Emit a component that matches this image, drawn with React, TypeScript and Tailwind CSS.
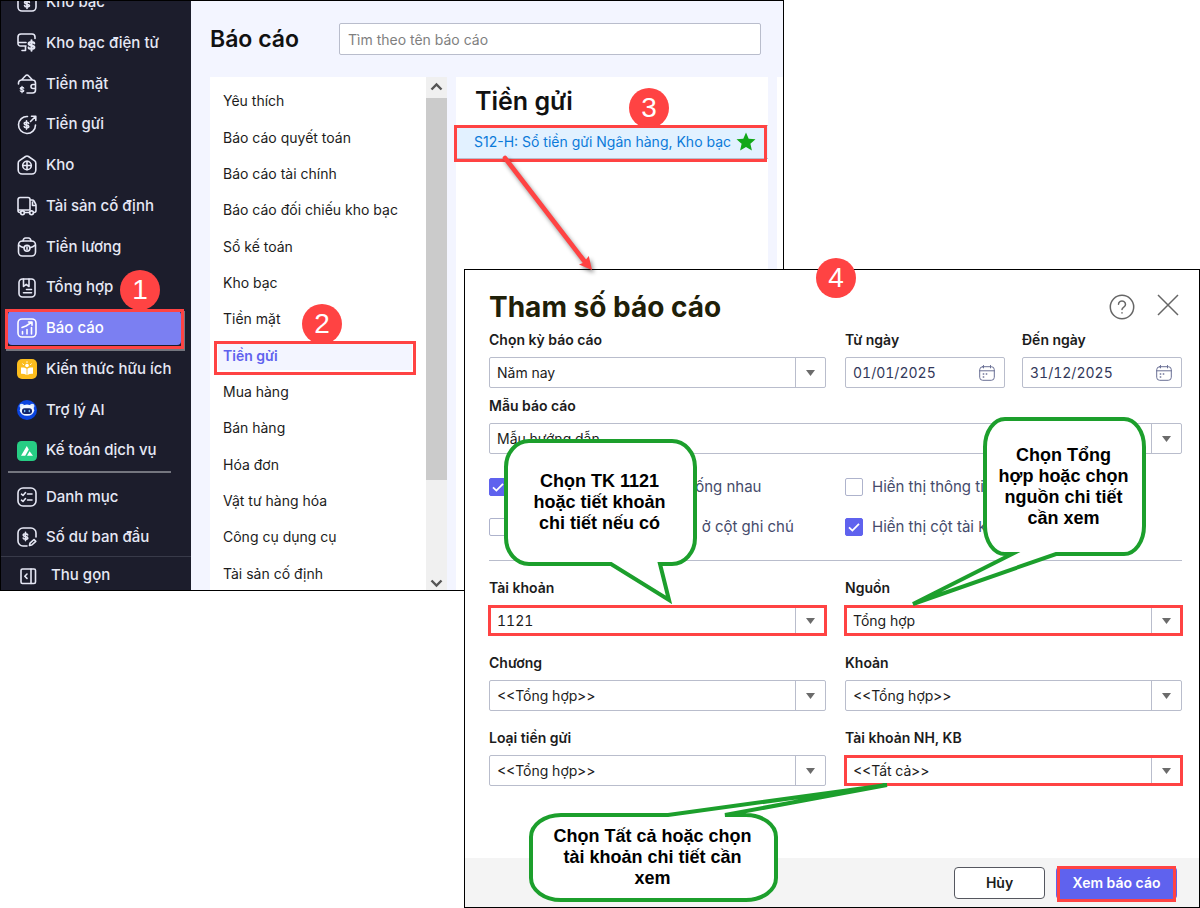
import type { ReactNode } from "react";

type IconProps = { children: ReactNode };

const LineIcon = ({ children }: IconProps) => (
  <svg
    viewBox="0 0 20 20"
    className="size-5 shrink-0"
    fill="none"
    stroke="currentColor"
    strokeWidth="1.6"
    strokeLinecap="round"
    strokeLinejoin="round"
    aria-hidden="true"
  >
    {children}
  </svg>
);

const Dollar = ({ x, y, scale = 1 }: { x: number; y: number; scale?: number }) => (
  <path
    transform={`translate(${x} ${y}) scale(${scale})`}
    strokeWidth="1.7"
    d="M2.3-1.7C2.1-3.2-2.4-3.3-2.4-1.4S2.4-.3 2.4 1.5-2.2 3.2-2.4 1.7M0-4.3v8.6"
  />
);

const icons = {
  treasury: (
    <LineIcon>
      <rect x="1" y="1" width="18" height="18" rx="4" />
      <Dollar x={10} y={12} />
    </LineIcon>
  ),
  etreasury: (
    <LineIcon>
      <path d="M18 5.500V4a3 3 0 0 0-3-3H4a3 3 0 0 0-3 3v6.500A2.500 2.500 0 0 0 3.500 13H9M1 9.500h8M8.500 13v4.500M5 17.500h3.500" />
      <Dollar x={14.5} y={12.500} scale={1.2} />
    </LineIcon>
  ),
  cash: (
    <LineIcon>
      <path d="M1.500 10V9a3 3 0 0 1 3-3h11a3 3 0 0 1 3 3v7a3 3 0 0 1-3 3H10M4.500 6l4-4.300a2 2 0 0 1 3 0l4 4.300M18.500 10.500H16a2 2 0 0 0 0 4h2.500" />
      <Dollar x={5} y={15.500} scale={0.75} />
    </LineIcon>
  ),
  deposit: (
    <LineIcon>
      <path d="M10.500 1.500a8.500 8.500 0 1 0 8 8.500M13.500 6.500l5-5M14.500 1.200h4.300v4.300" />
      <Dollar x={9.5} y={10} scale={0.95} />
    </LineIcon>
  ),
  stock: (
    <LineIcon>
      <path d="M1.200 8.200a3 3 0 0 1 1.300-2.500l6-4.200a2.600 2.600 0 0 1 3 0l6 4.200a3 3 0 0 1 1.300 2.500V15a4 4 0 0 1-4 4H5.200a4 4 0 0 1-4-4Z" />
      <circle cx="10" cy="10.500" r="4.300" />
      <path d="M10 6.200v8.600M5.700 10.500h8.600" />
    </LineIcon>
  ),
  asset: (
    <LineIcon>
      <path d="M3.500 16.500H3a2 2 0 0 1-2-2V3.500a2 2 0 0 1 2-2h8a2 2 0 0 1 2 2v10.500H1M13 4h2.300a2 2 0 0 1 1.700 1l1.700 3.200a3 3 0 0 1 .3 1.300v5a2 2 0 0 1-2 2M7.500 16.500h5M15.500 6v3.500h3.200" />
      <circle cx="5.500" cy="16.800" r="1.900" />
      <circle cx="14.500" cy="16.800" r="1.900" />
    </LineIcon>
  ),
  salary: (
    <LineIcon>
      <rect x="1.500" y="4" width="17" height="15" rx="4" />
      <path d="M6 4c.3-2 1.200-3 2.500-3h3c1.300 0 2.200 1 2.500 3M1.700 8.200c2 1.700 3.500 2.300 5.300 2.600M18.300 8.200c-2 1.700-3.500 2.300-5.300 2.600" />
      <circle cx="10" cy="11.300" r="2.900" />
      <path d="M10 10v2.600" />
    </LineIcon>
  ),
  ledger: (
    <LineIcon>
      <rect x="2" y="1" width="16" height="18" rx="3.500" />
      <path d="M6.500 1v7.500L9.200 6.300 12 8.500V1M9.500 11.500h5M6.500 14.800h8" />
    </LineIcon>
  ),
  report: (
    <LineIcon>
      <rect x="1" y="1" width="18" height="18" rx="4" />
      <path d="M5.500 16v-2.500M10 16v-4.500M14.500 16V9.500M5 9.500l4-1.500 5.500-3.700M11.500 4h3.500v3.200" />
    </LineIcon>
  ),
  knowledge: (
    <svg viewBox="0 0 20 20" className="size-5 shrink-0" aria-hidden="true">
      <rect width="20" height="20" rx="5" fill="#fbbc1d" />
      <path d="M4 8.500c2.300-.3 4.300.2 5.600 1.200v6.200C8 15 6 14.600 4 14.800ZM16 8.500c-2.300-.3-4.300.2-5.600 1.200v6.200c1.600-.9 3.600-1.300 5.600-1.100Z" fill="#fff" />
      <circle cx="10" cy="6.500" r="1.800" fill="#fff" />
      <path d="M6.500 5.500l-.8-.6M13.500 5.500l.8-.6M10 3.500v-.8" stroke="#fff" strokeWidth="1" strokeLinecap="round" />
    </svg>
  ),
  assistant: (
    <svg viewBox="0 0 20 20" className="size-5 shrink-0" aria-hidden="true">
      <circle cx="10" cy="10" r="10" fill="#0b45e0" />
      <circle cx="4.800" cy="6" r="2.300" fill="#dbe9ff" />
      <circle cx="15.200" cy="6" r="2.300" fill="#dbe9ff" />
      <ellipse cx="10" cy="10.200" rx="7.200" ry="5.600" fill="#f4f8ff" />
      <rect x="5" y="8.300" width="10" height="5.600" rx="2.600" fill="#12246b" />
      <path d="M7.700 10.400v1.200M12.300 10.400v1.200" stroke="#7fd0ff" strokeWidth="1.300" strokeLinecap="round" />
    </svg>
  ),
  service: (
    <svg viewBox="0 0 20 20" className="size-5 shrink-0" aria-hidden="true">
      <rect width="20" height="20" rx="4.500" fill="#27cd84" />
      <path d="M4 14.800 9.800 5l2 3.400-3.600 6.400ZM10 14.800l2.600-4.500 3.400 4.500Z" fill="#fff" />
    </svg>
  ),
  catalog: (
    <LineIcon>
      <rect x="1" y="1" width="18" height="18" rx="5" />
      <path d="M4.500 7.200l1.500 1.300 2.500-3M10.500 7H15M4.500 13.200l1.500 1.300 2.500-3M10.500 13H15" />
    </LineIcon>
  ),
  balance: (
    <LineIcon>
      <path d="M10 19H6a5 5 0 0 1-5-5V6a5 5 0 0 1 5-5h8a5 5 0 0 1 5 5v4M12.500 18.500l.5-2.300 4-3.700 1.800 1.900-4 3.600Z" />
      <Dollar x={8.5} y={9.500} scale={0.95} />
    </LineIcon>
  ),
  collapse: (
    <LineIcon>
      <rect x="4" y="3" width="14.500" height="14.500" rx="1.500" />
      <path d="M14 3v14.500M10 8l-2.200 2.200L10 12.400" />
    </LineIcon>
  ),
};

const menu = [
  { label: "Kho bạc", icon: icons.treasury },
  { label: "Kho bạc điện tử", icon: icons.etreasury },
  { label: "Tiền mặt", icon: icons.cash },
  { label: "Tiền gửi", icon: icons.deposit },
  { label: "Kho", icon: icons.stock },
  { label: "Tài sản cố định", icon: icons.asset },
  { label: "Tiền lương", icon: icons.salary },
  { label: "Tổng hợp", icon: icons.ledger },
  { label: "Báo cáo", icon: icons.report, active: true },
  { label: "Kiến thức hữu ích", icon: icons.knowledge },
  { label: "Trợ lý AI", icon: icons.assistant },
  { label: "Kế toán dịch vụ", icon: icons.service },
];

const categories = [
  "Yêu thích",
  "Báo cáo quyết toán",
  "Báo cáo tài chính",
  "Báo cáo đối chiếu kho bạc",
  "Sổ kế toán",
  "Kho bạc",
  "Tiền mặt",
  "Tiền gửi",
  "Mua hàng",
  "Bán hàng",
  "Hóa đơn",
  "Vật tư hàng hóa",
  "Công cụ dụng cụ",
  "Tài sản cố định",
];

const Badge = ({ n, className }: { n: number; className: string }) => (
  <span
    className={`absolute z-10 flex size-10 items-center justify-center rounded-full bg-[#ff4343] font-['Liberation_Sans',sans-serif] text-[28px] leading-none text-white ${className}`}
  >
    {n}
  </span>
);

const Frame = ({ className }: { className: string }) => (
  <span className={`pointer-events-none absolute border-3 border-[#ff4343] ${className}`} />
);

const Sidebar = () => (
  <aside className="flex w-[190px] shrink-0 flex-col bg-[#1c1d2c] text-[15px] font-medium text-[#e6e8f5]">
    <ul className="-mt-[19px] flex flex-1 flex-col">
      {menu.map((item) => (
        <li key={item.label} className="relative flex flex-1 items-center px-[7px]">
          <a
            href="#"
            className={`flex h-[34px] flex-1 items-center gap-[9px] rounded-sm pl-[9px] ${
              item.active ? "mr-[3px] bg-[#7b7ff2] text-white" : ""
            }`}
          >
            {item.icon}
            {item.label}
          </a>
          {item.active && (
            <>
              <Frame className="top-px right-[7px] bottom-0 left-1 shadow-[1px_2px_0_#74767f]" />
              <Badge n={1} className="-top-[38px] left-[119px]" />
            </>
          )}
        </li>
      ))}
    </ul>
    <hr className="mr-5 mb-[3px] ml-[7px] border-t-2 border-[#74767f]" />
    <a href="#" className="flex h-10 items-center gap-[9px] pt-0.5 pl-4">
      {icons.catalog}
      Danh mục
    </a>
    <a href="#" className="flex h-10 items-center gap-[9px] pt-0.5 pl-4">
      {icons.balance}
      Số dư ban đầu
    </a>
    <button type="button" className="flex h-[34px] items-center gap-3.5 border-t border-[#383a49] pt-1 pl-4">
      {icons.collapse}
      Thu gọn
    </button>
  </aside>
);

const Scrollbar = () => (
  <div className="flex w-[21px] shrink-0 flex-col bg-[#f0f0f0] text-[#555]" aria-hidden="true">
    <svg viewBox="0 0 21 21" className="h-[21px]" fill="none" stroke="currentColor" strokeWidth="2.400">
      <path d="M5.500 12.500l5-5 5 5" />
    </svg>
    <div className="flex-1 bg-[#cbcbcb]" />
    <svg viewBox="0 0 21 110" className="h-[110px]" fill="none" stroke="currentColor" strokeWidth="2.400">
      <path d="M5.500 100.500l5 5 5-5" />
    </svg>
  </div>
);

const ReportPage = () => (
  <div className="flex min-w-0 flex-1 flex-col bg-[#f3f5ff]">
    <header className="flex h-[76px] items-center pr-[22px] pl-[19px]">
      <h1 className="w-[129px] text-[23px] font-semibold text-[#111]">Báo cáo</h1>
      <input
        type="search"
        aria-label="Tìm theo tên báo cáo"
        placeholder="Tìm theo tên báo cáo"
        className="h-8 min-w-0 flex-1 rounded-xs border border-[#b9bdcc] bg-white px-2 text-sm placeholder:text-[#7f7f7f]"
      />
    </header>

    <div className="flex flex-1 gap-[9px] pl-[19px]">
      <div className="flex">
        <ul className="-mb-0.5 flex w-[216px] flex-col bg-white pt-1.5 text-sm text-[#1c1c1c]">
          {categories.map((name) =>
            name === "Tiền gửi" ? (
              <li key={name} className="relative flex flex-1 items-center">
                <a
                  href="#"
                  className="ml-2 flex h-7 w-[194px] items-center bg-[#f3f5ff] pl-[5px] font-semibold text-[#5f62ee]"
                >
                  {name}
                </a>
                <Frame className="top-[3px] right-2.5 -bottom-px left-1" />
                <Badge n={2} className="-top-[34px] left-[92px]" />
              </li>
            ) : (
              <li key={name} className="flex flex-1 items-center">
                <a href="#" className="pl-[13px]">
                  {name}
                </a>
              </li>
            )
          )}
        </ul>
        <Scrollbar />
      </div>

      <section className="min-w-0 flex-1 bg-white">
        <h2 className="h-12 pl-[19px] text-[25px] leading-12 font-semibold text-[#111]">Tiền gửi</h2>
        <div className="relative flex h-[34px] items-center border-y border-[#b9bdcc] bg-[#e2f1ff] pl-[18px]">
          <a href="#" className="flex-1 text-sm whitespace-nowrap text-[#0b7ad9]">
            S12-H: Sổ tiền gửi Ngân hàng, Kho bạc
          </a>
          <svg viewBox="0 0 20 20" className="mr-3 size-5" fill="#12a818" aria-hidden="true">
            <path d="M10 .5l2.700 6.200 6.800.6-5.100 4.500 1.500 6.700L10 15l-5.900 3.500 1.500-6.700L.5 7.300l6.800-.6Z" />
          </svg>
          <Frame className="-top-px right-px -bottom-1 -left-0.5" />
          <Badge n={3} className="-top-[38px] left-[173px]" />
          <svg
            viewBox="0 0 100 125"
            className="pointer-events-none absolute top-[27px] left-[45px] z-20 h-[125px] w-[100px] overflow-visible drop-shadow-[2px_3px_2px_rgba(0,0,0,0.45)]"
            aria-hidden="true"
          >
            <path d="M4 5l80 104" stroke="#ff4343" strokeWidth="4.600" strokeLinecap="round" />
            <path d="M91 117l-13-5.500 5-2 1-1 .6-1.500 3.200-4Z" fill="#ff4343" />
          </svg>
        </div>
      </section>
      <div className="-mr-px w-[7px] bg-white" />
    </div>
  </div>
);

type SelectProps = {
  id: string;
  label: string;
  value: string;
  className?: string;
  marked?: boolean;
};

const SelectField = ({ id, label, value, className = "", marked }: SelectProps) => (
  <div className={`flex flex-col gap-2 ${className}`}>
    <label htmlFor={id} className="text-sm leading-[18px] font-semibold">
      {label}
    </label>
    <div className="relative flex h-[31px] rounded-xs border border-[#b9bdcc] bg-white">
      <select id={id} className="min-w-0 flex-1 appearance-none pl-[7px] text-sm tabular-nums outline-none">
        <option>{value}</option>
      </select>
      <span className="pointer-events-none absolute inset-y-0 right-0 flex w-[30px] items-center justify-center border-l border-[#b9bdcc]">
        <svg viewBox="0 0 9 6" className="h-1.5 w-[9px]" fill="#6b6b6b" aria-hidden="true">
          <path d="M0 0h9L4.500 6Z" />
        </svg>
      </span>
      {marked && <Frame className="-inset-x-0.5 -inset-y-px" />}
    </div>
  </div>
);

const DateField = ({ id, label, value }: { id: string; label: string; value: string }) => (
  <div className="flex min-w-0 flex-col gap-2">
    <label htmlFor={id} className="text-sm leading-[18px] font-semibold">
      {label}
    </label>
    <div className="flex h-[31px] items-center rounded-xs border border-[#b9bdcc] pr-[9px]">
      <input
        id={id}
        defaultValue={value}
        className="min-w-0 flex-1 pl-[7px] text-sm text-[#32385a] tabular-nums outline-none"
      />
      <svg viewBox="0 0 16 16" className="size-4" fill="none" stroke="#6a7095" strokeLinecap="round" aria-hidden="true">
        <rect x=".7" y="1.700" width="14.600" height="13.600" rx="3" />
        <path d="M.7 5.800h14.600M4.500.5v2.400M11.500.5v2.400" />
        <path d="M4.300 9h.4M7.300 9h.4M4.300 12h.4" strokeWidth="1.500" />
      </svg>
    </div>
  </div>
);

const CheckField = ({ label, checked }: { label: string; checked?: boolean }) => (
  <label className="flex h-[18px] items-center gap-[9px] text-[15px] whitespace-nowrap text-[#454b6b]">
    <span className="relative flex size-[18px]">
      <input
        type="checkbox"
        defaultChecked={checked}
        className="peer size-[18px] appearance-none rounded-xs border border-[#aeb3cc] bg-white checked:border-[#5f62ee] checked:bg-[#5f62ee]"
      />
      <svg
        viewBox="0 0 18 18"
        className="pointer-events-none absolute inset-0 hidden peer-checked:block"
        fill="none"
        stroke="#fff"
        strokeWidth="1.800"
        aria-hidden="true"
      >
        <path d="M4 9.300l3.400 3.300L14 5.800" />
      </svg>
    </span>
    {label}
  </label>
);

type CalloutProps = {
  className: string;
  textClass: string;
  path: string;
  lines: string[];
};

const Callout = ({ className, textClass, path, lines }: CalloutProps) => (
  <div className={`pointer-events-none absolute z-10 ${className}`}>
    <svg className="absolute inset-0 size-full overflow-visible" aria-hidden="true">
      <path d={path} fill="#fff" stroke="#1c9f2c" strokeWidth="4" strokeMiterlimit="10" />
    </svg>
    <p
      className={`relative pr-0.5 text-center font-['Liberation_Sans',sans-serif] text-lg leading-[21px] font-bold text-black ${textClass}`}
    >
      {lines.map((line) => (
        <span key={line} className="block whitespace-nowrap">
          {line}
        </span>
      ))}
    </p>
  </div>
);

const ParamsDialog = () => (
  <div
    role="dialog"
    aria-labelledby="dialog-title"
    className="absolute top-[269px] right-0 left-[464px] border border-black bg-white text-[#1c1c1c]"
  >
    <Badge n={4} className="-top-3 left-[351px]" />

    <header className="flex h-[61px] items-center justify-between pt-3 pr-5 pl-6">
      <h2 id="dialog-title" className="text-[28px] leading-9 font-bold text-[#1f2008]">
        Tham số báo cáo
      </h2>
      <div className="flex items-center gap-[22px] text-[#666]">
        <button type="button" aria-label="Trợ giúp">
          <svg viewBox="0 0 26 26" className="size-[26px]" fill="none" stroke="currentColor" strokeWidth="1.500" strokeLinecap="round" aria-hidden="true">
            <circle cx="13" cy="13" r="11.700" />
            <path d="M9.500 10.300a3.500 3.300 0 1 1 5.300 2.800c-1.200.7-1.800 1.200-1.800 2.500M13 18.700v.3" />
          </svg>
        </button>
        <button type="button" aria-label="Đóng" className="pb-1">
          <svg viewBox="0 0 22 22" className="size-[22px]" fill="none" stroke="currentColor" strokeWidth="1.500" aria-hidden="true">
            <path d="M1 1l20 20M21 1L1 21" />
          </svg>
        </button>
      </div>
    </header>

    <form className="pr-[17px] pb-[72px] pl-6">
      <div className="grid grid-cols-2 gap-x-[19px] gap-y-[9px]">
        <SelectField id="period" label="Chọn kỳ báo cáo" value="Năm nay" />
        <div className="grid grid-cols-2 gap-[17px]">
          <DateField id="from" label="Từ ngày" value="01/01/2025" />
          <DateField id="to" label="Đến ngày" value="31/12/2025" />
        </div>
        <SelectField id="template" label="Mẫu báo cáo" value="Mẫu hướng dẫn" className="col-span-2" />
      </div>

      <div className="grid grid-cols-2 gap-x-[19px] gap-y-[22px] border-b border-[#b9bdcc] py-6">
        <CheckField label="Cộng gộp các bút toán giống nhau" checked />
        <CheckField label="Hiển thị thông tin đối tượng" />
        <CheckField label="Hiển thị nội dung bổ sung ở cột ghi chú" />
        <CheckField label="Hiển thị cột tài khoản đối ứng" checked />
      </div>

      <div className="grid grid-cols-2 gap-x-[19px] gap-y-[18px] pt-[18px]">
        <SelectField id="account" label="Tài khoản" value="1121" marked />
        <SelectField id="source" label="Nguồn" value="Tổng hợp" marked />
        <SelectField id="chapter" label="Chương" value="<<Tổng hợp>>" />
        <SelectField id="clause" label="Khoản" value="<<Tổng hợp>>" />
        <SelectField id="deposit-type" label="Loại tiền gửi" value="<<Tổng hợp>>" />
        <SelectField id="bank-account" label="Tài khoản NH, KB" value="<<Tất cả>>" marked />
      </div>
    </form>

    <footer className="flex h-[49px] items-center justify-end gap-[11px] bg-[#f4f4f4] pr-[22px] text-sm font-semibold">
      <button type="button" className="h-8 w-[91px] rounded-sm border border-[#55575f] bg-white">
        Hủy
      </button>
      <button type="button" className="relative h-8 w-[121px] rounded-sm bg-[#5f62ee] text-white">
        Xem báo cáo
        <Frame className="-top-px right-px -bottom-[3px] left-px" />
      </button>
    </footer>

    <Callout
      className="top-[169px] left-[39px] h-[127px] w-[193px]"
      textClass="pt-8"
      path="M25 2H168A23 26 0 0 1 191 28V99A23 26 0 0 1 168 125H156L165 161L107 125H25A23 26 0 0 1 2 99V28A23 26 0 0 1 25 2Z"
      lines={["Chọn TK 1121", "hoặc tiết khoản", "chi tiết nếu có"]}
    />
    <Callout
      className="top-[147px] right-[53px] h-[139px] w-[163px]"
      textClass="pt-7"
      path="M22 2H141A20 28 0 0 1 161 30V109A20 28 0 0 1 141 137H73L-70 187L29 137H22A20 28 0 0 1 2 109V30A20 28 0 0 1 22 2Z"
      lines={["Chọn Tổng", "hợp hoặc chọn", "nguồn chi tiết", "cần xem"]}
    />
    <Callout
      className="top-[543px] left-16 h-[89px] w-[249px]"
      textClass="pt-[13px]"
      path="M32 2H139L358-28L196 2H217A30 22 0 0 1 247 24V65A30 22 0 0 1 217 87H32A30 22 0 0 1 2 65V24A30 22 0 0 1 32 2Z"
      lines={["Chọn Tất cả hoặc chọn", "tài khoản chi tiết cần", "xem"]}
    />
  </div>
);

const App = () => {
  return (
    <main className="relative min-h-screen overflow-hidden bg-white font-['Inter',sans-serif]">
      <div className="mr-[416px] flex min-h-[591px] overflow-hidden border border-black">
        <Sidebar />
        <ReportPage />
      </div>
      <ParamsDialog />
    </main>
  );
};

export default App;
